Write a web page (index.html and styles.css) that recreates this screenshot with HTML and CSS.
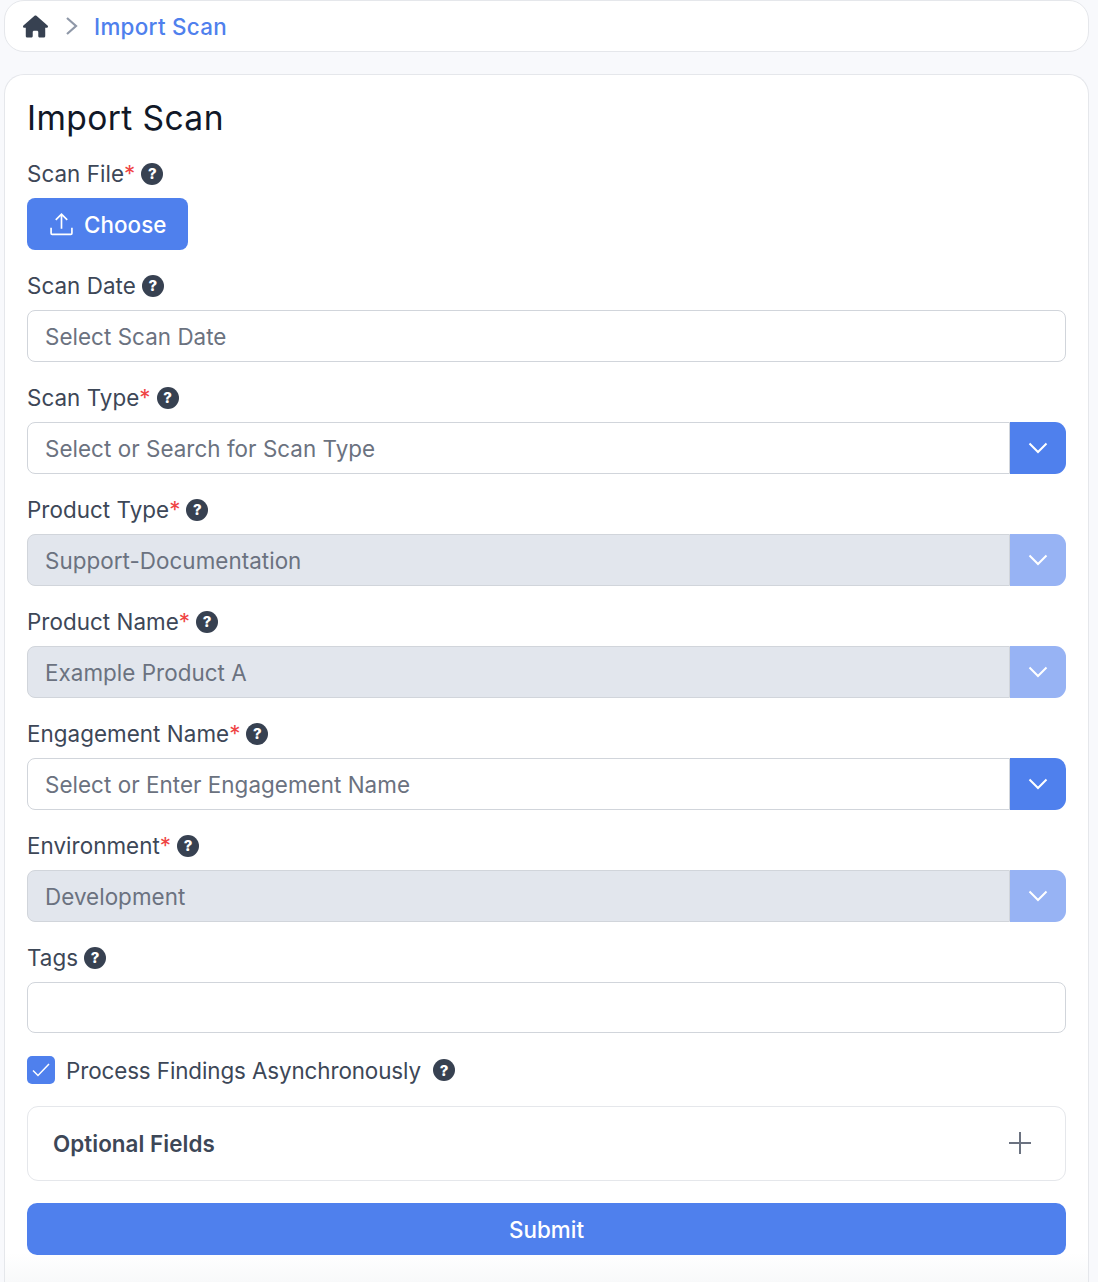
FILE: index.html
```html
<!DOCTYPE html>
<html lang="en">
<head>
  <meta charset="UTF-8" />
  <title>Import Scan</title>
  <link rel="stylesheet" href="styles.css">
</head>
<body>

  <nav class="breadcrumb">
    <svg class="home-icon" viewBox="0 0 576 512" aria-hidden="true"><path d="M575.8 255.5c0 18-15 32.1-32 32.1h-32l.7 160.2c0 2.7-.2 5.4-.5 8.1V472c0 22.1-17.9 40-40 40H456c-1.100 0-2.200 0-3.300-.1-1.400.1-2.800.1-4.200.1H416 392c-22.100 0-40-17.900-40-40V448 384c0-17.700-14.300-32-32-32H256c-17.700 0-32 14.300-32 32v64 24c0 22.100-17.900 40-40 40H160 128.100c-1.500 0-3-.1-4.500-.2-1.200.1-2.400.2-3.600.2H104c-22.100 0-40-17.900-40-40V360c0-.9 0-1.900.1-2.800V287.600H32c-18 0-32-14-32-32.100 0-9 3-17 10-24L266.400 8c7-7 15-8 22-8s15 2 21 7L564.800 231.500c8 7 12 15 11 24z"/></svg>
    <svg class="crumb-sep" viewBox="0 0 14 20" aria-hidden="true"><path d="M2 2l9 8-9 8"/></svg>
    <a class="crumb-link" href="#">Import Scan</a>
  </nav>

  <main class="card">
    <h1>Import Scan</h1>
    <form>
      <div class="field">
        <div class="label">Scan File<span class="req">*</span><span class="help">?</span></div>
        <button type="button" class="choose-btn">
          <svg viewBox="0 0 24 24" aria-hidden="true"><path d="M2 15v5.500a1 1 0 0 0 1 1h18a1 1 0 0 0 1-1V15M12 16V2M6.500 7.500L12 2l5.500 5.500"/></svg>
          Choose
        </button>
      </div>

      <div class="field">
        <div class="label">Scan Date<span class="help">?</span></div>
        <div class="input placeholder">Select Scan Date</div>
      </div>

      <div class="field">
        <div class="label">Scan Type<span class="req">*</span><span class="help">?</span></div>
        <div class="select">
          <div class="input placeholder">Select or Search for Scan Type</div>
          <span class="caret"><svg viewBox="0 0 20 12" aria-hidden="true"><path d="M1.500 1.500L10 10l8.500-8.500"/></svg></span>
        </div>
      </div>

      <div class="field">
        <div class="label">Product Type<span class="req">*</span><span class="help">?</span></div>
        <div class="select disabled">
          <div class="input placeholder">Support-Documentation</div>
          <span class="caret"><svg viewBox="0 0 20 12" aria-hidden="true"><path d="M1.500 1.500L10 10l8.500-8.500"/></svg></span>
        </div>
      </div>

      <div class="field">
        <div class="label">Product Name<span class="req">*</span><span class="help">?</span></div>
        <div class="select disabled">
          <div class="input placeholder">Example Product A</div>
          <span class="caret"><svg viewBox="0 0 20 12" aria-hidden="true"><path d="M1.500 1.500L10 10l8.500-8.500"/></svg></span>
        </div>
      </div>

      <div class="field">
        <div class="label">Engagement Name<span class="req">*</span><span class="help">?</span></div>
        <div class="select">
          <div class="input placeholder">Select or Enter Engagement Name</div>
          <span class="caret"><svg viewBox="0 0 20 12" aria-hidden="true"><path d="M1.500 1.500L10 10l8.500-8.500"/></svg></span>
        </div>
      </div>

      <div class="field">
        <div class="label">Environment<span class="req">*</span><span class="help">?</span></div>
        <div class="select disabled">
          <div class="input placeholder">Development</div>
          <span class="caret"><svg viewBox="0 0 20 12" aria-hidden="true"><path d="M1.500 1.500L10 10l8.500-8.500"/></svg></span>
        </div>
      </div>

      <div class="field">
        <div class="label">Tags<span class="help">?</span></div>
        <div class="input tags"></div>
      </div>

      <div class="check-row">
        <span class="checkbox"><svg viewBox="0 0 20 20" aria-hidden="true"><path d="M2 10.500l5 5L18 4"/></svg></span>
        <span class="check-label">Process Findings Asynchronously</span>
        <span class="help">?</span>
      </div>

      <div class="accordion">
        <span class="accordion-title">Optional Fields</span>
        <svg viewBox="0 0 22 22" aria-hidden="true"><path d="M11 0v22M0 11h22"/></svg>
      </div>

      <button type="button" class="submit-btn">Submit</button>
    </form>
  </main>

</body>
</html>
```

FILE: styles.css
```css
* {
  box-sizing: border-box;
}
html, body {
  height: 1282px;
  overflow: hidden;
}
body {
  margin: 0;
  padding: 0 9px 0 4px;
  background: #f8f9fc;
  color: #3d4757;
  font-family: Inter, "Liberation Sans", sans-serif;
  font-size: 22.4px;
  letter-spacing: 0.05px;
}
.breadcrumb {
  display: flex;
  align-items: center;
  height: 52px;
  padding: 0 18px;
  background: white;
  border: 1px solid #e5e7eb;
  border-radius: 20px;
}
.home-icon {
  width: 25px;
  height: 23px;
  fill: #374151;
}
.crumb-sep {
  width: 14px;
  height: 20px;
  margin: 0 15px 0 17px;
  fill: none;
  stroke: #8f98a8;
  stroke-width: 2.200;
}
.crumb-link {
  color: #4f80ed;
  font-weight: 500;
  letter-spacing: 0.3px;
  text-decoration: none;
}
.card {
  height: 1208px;
  margin-top: 22px;
  padding: 22px 22px 0;
  background: linear-gradient(#fff 1178px, #f8f9fa 1208px);
  border: 1px solid #e5e7eb;
  border-bottom: none;
  border-radius: 20px 20px 0 0;
}
h1 {
  margin: 0 0 23px;
  color: #111827;
  font-size: 33.6px;
  font-weight: 400;
  letter-spacing: 0.4px;
  line-height: 42px;
}
.field {
  margin-bottom: 24px;
}
.label {
  display: flex;
  align-items: center;
  height: 24px;
  margin-bottom: 12px;
  line-height: 24px;
}
.req {
  color: #ef4444;
}
.help {
  display: flex;
  flex-shrink: 0;
  align-items: center;
  justify-content: center;
  width: 22px;
  height: 22px;
  margin-left: 6px;
  background: #374151;
  border-radius: 50%;
  color: white;
  font-size: 15px;
  font-weight: 800;
  letter-spacing: 0;
}
.choose-btn {
  display: flex;
  align-items: center;
  gap: 10px;
  height: 52px;
  padding: 0 22px;
  background: #4f80ed;
  border: none;
  border-radius: 8px;
  color: white;
  font: inherit;
  letter-spacing: 0.05px;
  font-weight: 500;
}
.choose-btn svg {
  width: 25px;
  height: 25px;
  fill: none;
  stroke: white;
  stroke-width: 1.600;
}
.input {
  display: flex;
  flex: 1;
  align-items: center;
  height: 52px;
  padding: 0 17px;
  background: white;
  border: 1px solid #d1d5db;
  border-radius: 8px;
}
.placeholder {
  color: #6b7280;
}
.tags {
  height: 51px;
}
.select {
  display: flex;
}
.select .input {
  border-radius: 8px 0 0 8px;
}
.caret {
  display: flex;
  align-items: center;
  justify-content: center;
  width: 56px;
  background: #4f80ed;
  border-radius: 0 11px 11px 0;
}
.caret svg {
  width: 20px;
  height: 12px;
  fill: none;
  stroke: white;
  stroke-width: 2;
}
.select.disabled .input {
  background: #e2e6ed;
}
.select.disabled .caret {
  background: #97b3f4;
}
.check-row {
  display: flex;
  align-items: center;
  height: 28px;
  margin-top: -1px;
}
.checkbox {
  display: flex;
  align-items: center;
  justify-content: center;
  width: 28px;
  height: 28px;
  background: #4f80ed;
  border-radius: 5px;
}
.checkbox svg {
  width: 20px;
  height: 20px;
  fill: none;
  stroke: white;
  stroke-width: 1.500;
}
.check-label {
  margin: 0 6px 0 11px;
  letter-spacing: -0.1px;
}
.accordion {
  display: flex;
  align-items: center;
  justify-content: space-between;
  height: 75px;
  margin-top: 22px;
  padding: 0 34px 1px 25px;
  background: white;
  border: 1px solid #e5e7eb;
  border-radius: 11px;
}
.accordion-title {
  font-weight: 600;
}
.accordion svg {
  width: 22px;
  height: 22px;
  stroke: #6b7280;
  stroke-width: 2;
}
.submit-btn {
  width: 100%;
  height: 52px;
  margin-top: 22px;
  background: #4f80ed;
  border: none;
  border-radius: 10px;
  color: white;
  font: inherit;
  letter-spacing: inherit;
  font-weight: 500;
}
```
